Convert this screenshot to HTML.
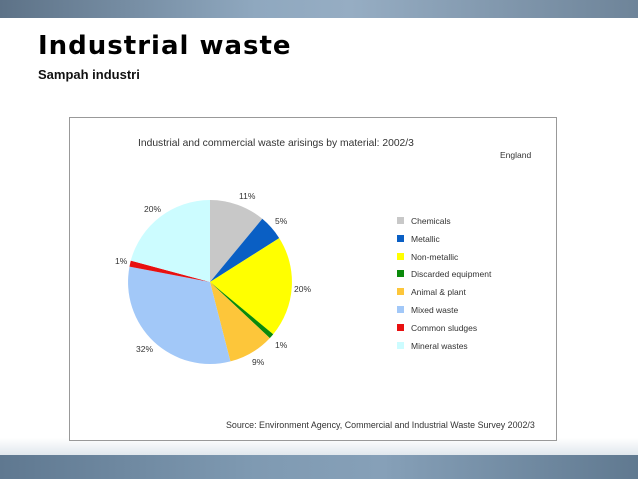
<!DOCTYPE html>
<html><head><style>
body{margin:0;width:638px;height:479px;overflow:hidden;background:#fff;font-family:"Liberation Sans",sans-serif;position:relative}
.top{position:absolute;left:0;top:0;width:638px;height:18px;background:linear-gradient(90deg,#5d7287,#8fa8bf 40%,#96adc3 55%,#6e8499)}
.bl{position:absolute;left:0;top:438px;width:638px;height:18px;background:linear-gradient(#fff,#dfe6ec)}
.bot{position:absolute;left:0;top:455px;width:638px;height:24px;background:linear-gradient(90deg,#5f7890,#7f9ab2 40%,#86a0b8 60%,#607990)}
h1{position:absolute;left:38px;top:31px;margin:0;font:bold 26px "DejaVu Sans","Liberation Sans",sans-serif;letter-spacing:1px;color:#000}
.sub{position:absolute;left:38px;top:67px;font-size:13px;font-weight:bold;color:#111}
.box{position:absolute;left:69px;top:117px;width:486px;height:322px;border:1px solid #999;background:#fff}
svg{position:absolute;left:0;top:0}
</style></head><body>
<div class="top"></div><div class="bl"></div><div class="bot"></div>
<h1>Industrial waste</h1>
<div class="sub">Sampah industri</div>
<div class="box"></div>
<svg width="638" height="479" font-family="Liberation Sans, sans-serif" font-size="8.5" fill="#333">
<text x="138" y="146" font-size="10.3">Industrial and commercial waste arisings by material: 2002/3</text>
<text x="500" y="158">England</text>
<g>
<path d="M210 282L210 200A82 82 0 0 1 262.3 218.8Z" fill="#c8c8c8"/>
<path d="M210 282L262.3 218.8A82 82 0 0 1 279.2 238.1Z" fill="#0a5fc4"/>
<path d="M210 282L279.2 238.1A82 82 0 0 1 273.2 334.2Z" fill="#ffff00"/>
<path d="M210 282L273.2 334.2A82 82 0 0 1 269.8 338.1Z" fill="#0a8a0a"/>
<path d="M210 282L269.8 338.1A82 82 0 0 1 230.4 361.4Z" fill="#fdc63a"/>
<path d="M210 282L230.4 361.4A82 82 0 0 1 129.5 266.6Z" fill="#a2c8f8"/>
<path d="M210 282L129.5 266.6A82 82 0 0 1 130.8 260.6Z" fill="#e81010"/>
<path d="M210 282L130.8 260.6A82 82 0 0 1 210 200Z" fill="#ccfcff"/>
</g>
<text x="239" y="199">11%</text><text x="275" y="224">5%</text><text x="294" y="292">20%</text>
<text x="275" y="348">1%</text><text x="252" y="365">9%</text><text x="136" y="352">32%</text>
<text x="115" y="264">1%</text><text x="144" y="212">20%</text>
<g>
<rect x="397" y="217" width="7" height="7" fill="#c8c8c8"/><text x="411" y="224">Chemicals</text>
<rect x="397" y="235" width="7" height="7" fill="#0a5fc4"/><text x="411" y="242">Metallic</text>
<rect x="397" y="253" width="7" height="7" fill="#ffff00"/><text x="411" y="260">Non-metallic</text>
<rect x="397" y="270" width="7" height="7" fill="#0a8a0a"/><text x="411" y="277">Discarded equipment</text>
<rect x="397" y="288" width="7" height="7" fill="#fdc63a"/><text x="411" y="295">Animal &amp; plant</text>
<rect x="397" y="306" width="7" height="7" fill="#a2c8f8"/><text x="411" y="313">Mixed waste</text>
<rect x="397" y="324" width="7" height="7" fill="#e81010"/><text x="411" y="331">Common sludges</text>
<rect x="397" y="342" width="7" height="7" fill="#ccfcff"/><text x="411" y="349">Mineral wastes</text>
</g>
<text x="226" y="428" font-size="8.9">Source: Environment Agency, Commercial and Industrial Waste Survey 2002/3</text>
</svg>
</body></html>
